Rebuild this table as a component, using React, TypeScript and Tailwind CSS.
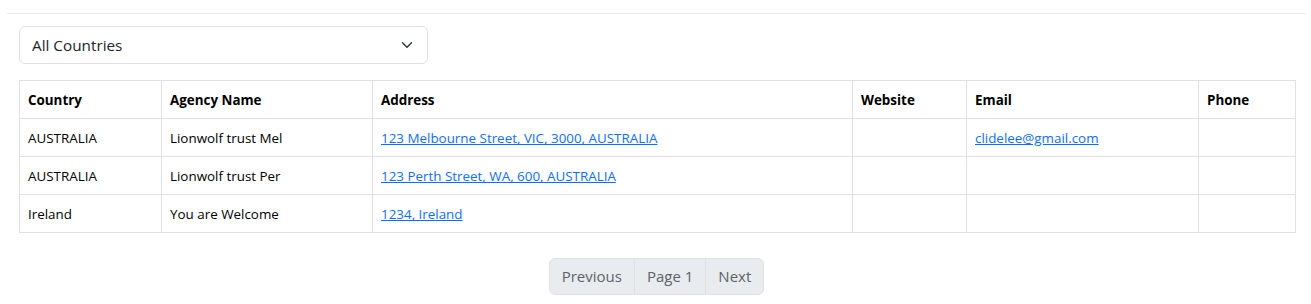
import React from "react";

type Agency = {
  country: string;
  name: string;
  address: string;
  website: string;
  email: string;
  phone: string;
};

const agencies: Agency[] = [
  {
    country: "AUSTRALIA",
    name: "Lionwolf trust Mel",
    address: "123 Melbourne Street, VIC, 3000, AUSTRALIA",
    website: "",
    email: "clidelee@gmail.com",
    phone: "",
  },
  {
    country: "AUSTRALIA",
    name: "Lionwolf trust Per",
    address: "123 Perth Street, WA, 600, AUSTRALIA",
    website: "",
    email: "",
    phone: "",
  },
  {
    country: "Ireland",
    name: "You are Welcome",
    address: "1234, Ireland",
    website: "",
    email: "",
    phone: "",
  },
];

const cell = "border border-[#dee2e6] pl-[8px] pr-[9px] pt-[2px] h-[38px] align-middle";

export default function App() {
  return (
    <div
      className="bg-white text-black"
      style={{ fontFamily: '"Segoe UI", "Open Sans", "Noto Sans", sans-serif' }}
    >
      <div className="pt-[13px] px-[7px] pr-[5px]">
        <div className="border-t border-[#ececf4]" />
      </div>
      <div className="pl-[19px] pr-[17px] pt-[12px]">
        <div className="w-[409px] h-[38px] border border-[#dee2e6] rounded-[6px] flex items-center justify-between pl-[12px] pr-[14px] text-[15.3px] text-[#212529]">
          <span>All Countries</span>
          <svg width="12" height="12" viewBox="0 0 16 16" fill="none" stroke="#343a40" strokeWidth="2" strokeLinecap="round" strokeLinejoin="round">
            <path d="M2 5l6 6 6-6" />
          </svg>
        </div>

        <table className="mt-[16px] w-full table-fixed border-collapse text-[13.4px]">
          <colgroup>
            <col className="w-[142px]" />
            <col className="w-[211px]" />
            <col className="w-[480px]" />
            <col className="w-[114px]" />
            <col className="w-[232px]" />
            <col className="w-[97px]" />
          </colgroup>
          <thead>
            <tr className="text-left font-bold">
              <th className={cell}>Country</th>
              <th className={cell}>Agency Name</th>
              <th className={cell}>Address</th>
              <th className={cell}>Website</th>
              <th className={cell}>Email</th>
              <th className={cell}>Phone</th>
            </tr>
          </thead>
          <tbody>
            {agencies.map((a) => (
              <tr key={a.name}>
                <td className={cell}>{a.country}</td>
                <td className={cell}>{a.name}</td>
                <td className={cell}>
                  <a href="#" className="text-[#0d6efd] underline">
                    {a.address}
                  </a>
                </td>
                <td className={cell}>{a.website}</td>
                <td className={cell}>
                  {a.email && (
                    <a href="#" className="text-[#0d6efd] underline">
                      {a.email}
                    </a>
                  )}
                </td>
                <td className={cell}>{a.phone}</td>
              </tr>
            ))}
          </tbody>
        </table>

        <div className="flex justify-center mt-[25px]">
          <div className="flex h-[37px] rounded-[6px] border border-[#dee2e6] bg-[#e9ecef] text-[15px] text-[#5c636a] overflow-hidden">
            <button className="px-[12px] border-r border-[#dee2e6]">Previous</button>
            <button className="px-[12px] border-r border-[#dee2e6]">Page 1</button>
            <button className="px-[12px]">Next</button>
          </div>
        </div>
      </div>
    </div>
  );
}
